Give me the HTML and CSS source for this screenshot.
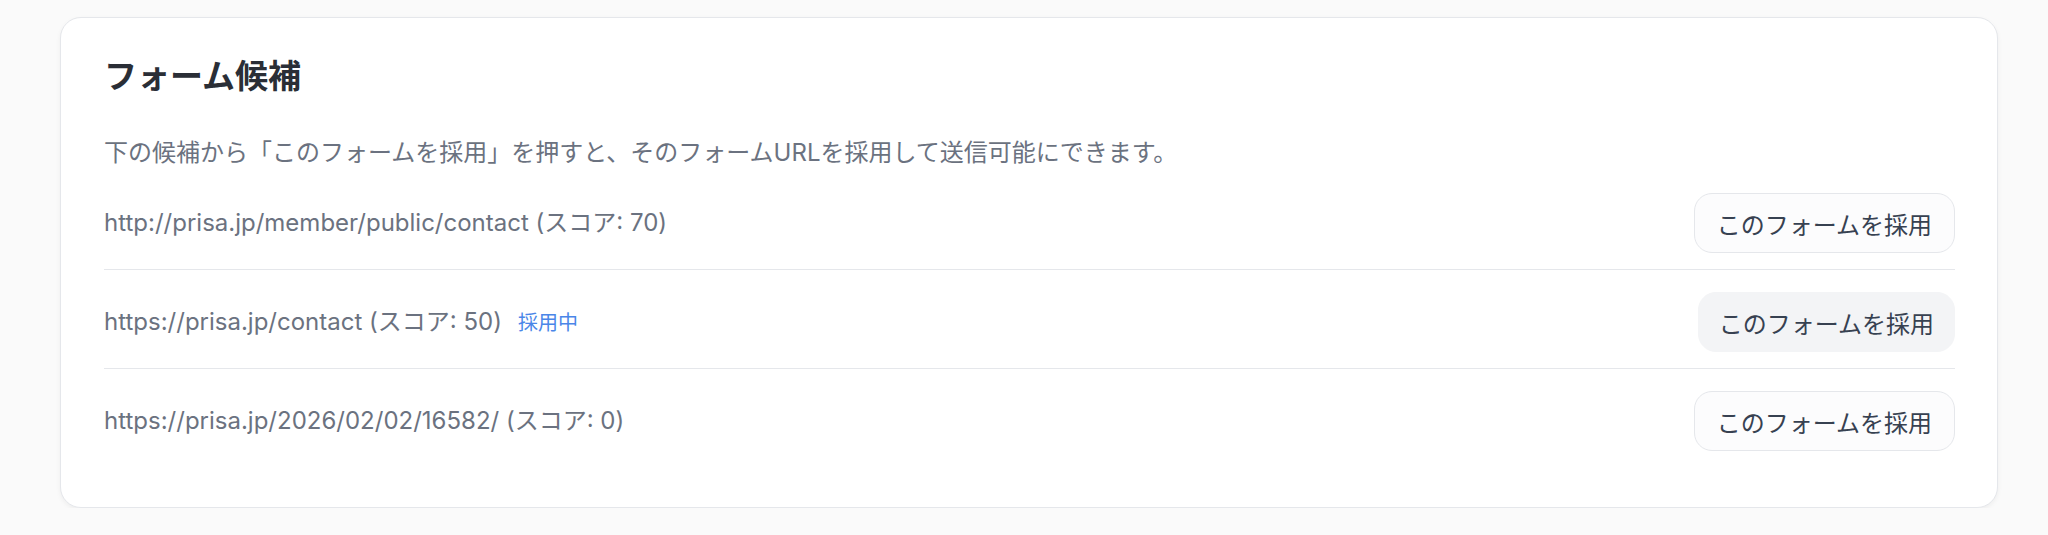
FILE: index.html
```html
<!DOCTYPE html>
<html lang="ja">
<head>
    <meta charset="UTF-8">
    <meta name="viewport" content="width=device-width, initial-scale=1.0">
    <title>フォーム候補</title>
    <link rel="stylesheet" href="styles.css">
</head>
<body>
    <section class="card">
        <h2 class="card-title">フォーム候補</h2>
        <p class="card-note">下の候補から「このフォームを採用」を押すと、そのフォームURLを採用して送信可能にできます。</p>

        <ul class="candidates">
            <li class="candidate">
                <div class="candidate-url">http://prisa.jp/member/public/contact (スコア: 70)</div>
                <button class="adopt-btn">このフォームを採用</button>
            </li>
            <li class="candidate">
                <div class="candidate-url">https://prisa.jp/contact (スコア: 50)<span class="current-badge">採用中</span></div>
                <button class="adopt-btn is-current" disabled>このフォームを採用</button>
            </li>
            <li class="candidate">
                <div class="candidate-url">https://prisa.jp/2026/02/02/16582/ (スコア: 0)</div>
                <button class="adopt-btn">このフォームを採用</button>
            </li>
        </ul>
    </section>
</body>
</html>
```

FILE: styles.css
```css
body {
    margin: 0;
    padding: 17px 50px 0 60px;
    background-color: #fafafa;
    font-family: Inter, "Noto Sans CJK JP", sans-serif;
    color: #1f2937;
}
.card {
    background: white;
    border: 1.5px solid #e5e7eb;
    border-radius: 21px;
    box-shadow: 0 2px 5px rgba(0,0,0,0.05);
    padding: 38px 42px 40px 43px;
}
.card-title {
    margin: 0;
    font-size: 33px;
    line-height: 40px;
    font-weight: 700;
    color: #2a2e36;
}
.card-note {
    margin: 39px 0 0;
    font-size: 24px;
    line-height: 36px;
    color: #6b7280;
}
.candidates {
    list-style: none;
    margin: 0;
    padding: 0;
}
.candidate {
    display: flex;
    align-items: center;
    justify-content: space-between;
    padding: 22px 0 16px;
    border-bottom: 1.5px solid #e5e7eb;
}
.candidate:last-child {
    border-bottom: none;
}
.candidate-url {
    font-size: 24px;
    line-height: 36px;
    color: #6b7280;
}
.current-badge {
    margin-left: 16px;
    font-size: 20px;
    color: #4a86e8;
}
.adopt-btn {
    height: 60px;
    padding: 0 22px;
    white-space: nowrap;
    background-color: #fcfcfd;
    border: 1.5px solid #e5e7eb;
    border-radius: 18px;
    font-family: inherit;
    font-size: 24px;
    color: #374151;
    cursor: pointer;
}
.adopt-btn:hover {
    background-color: #f3f4f6;
}
.adopt-btn.is-current {
    padding: 0 20px;
    background-color: #f3f4f6;
    border-color: #f3f4f6;
    color: #374151;
    cursor: default;
}
```
